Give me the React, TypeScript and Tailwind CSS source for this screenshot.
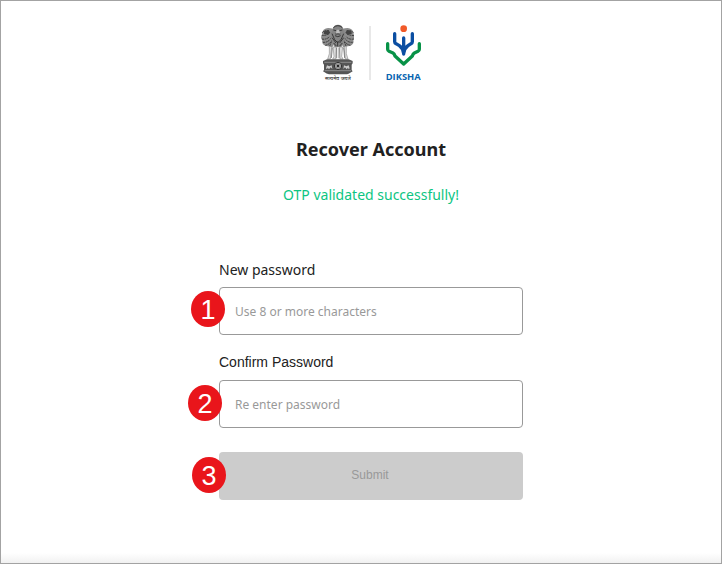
import React from "react";

const noto = "font-['Noto_Sans',sans-serif]";
const arial = "font-['Liberation_Sans',sans-serif]";

function Emblem() {
  return (
    <svg viewBox="30 27 102 171" className="h-[57px] w-[34px]" aria-label="State Emblem of India">
      {/* side lions */}
      <path d="M41 44q9-8 21-4l12 2v42l-7 13-21-5q-12-4-9-16-7-8-1-16-1-10 5-16Z" fill="#8c8c8c" />
      <path d="M126 44q-9-8-21-4l-12 2v42l7 13 21-5q12-4 9-16 7-8 1-16 1-10-5-16Z" fill="#8c8c8c" />
      <g stroke="#2c2c2c" strokeWidth="2.5" fill="none" strokeDasharray="6 2">
        <path d="M37 53q8-10 22-5M35 61q11 2 22-5M36 72q12 3 23-7M39 82q16 1 23-12M46 91q12-3 17-11M59 93l7-17" />
        <path d="M130 53q-8-10-22-5M132 61q-11 2-22-5M131 72q-12 3-23-7M128 82q-16 1-23-12M121 91q-12-3-17-11M108 93l-7-17" />
      </g>
      <path d="M42 49l14-3 5 7-7 6-12-2ZM125 49l-14-3-5 7 7 6 12-2Z" fill="#444" />
      {/* central lion */}
      <path d="M69 40q2-10 15-11 13 1 15 11l5 15-2 24-8 18H74l-8-18-2-24Z" fill="#858585" />
      <path d="M70 38q14-12 27 0M70 45l9 2M97 45l-9 2M76 57h15M75 62q8 6 17 0M66 56l8 18 9 9 10-9 8-18M66 68l12 16M101 68L89 84M71 84l8 9M97 84l-8 9M83 79v15" stroke="#303030" strokeWidth="2.7" fill="none" />
      <path d="M80 44h7l3 10-6 4-6-4Z" fill="#c0c0c0" />
      <path d="M81 54h6l-3 3Z" fill="#222" />
      {/* legs */}
      <path d="M58 92l7 5-4 35h-8l5-16ZM109 92l-7 5 4 35h8l-5-16ZM69 96h10l-2 36h-9l4-8ZM98 96H88l2 36h9l-4-8Z" fill="#ddd" stroke="#777" strokeWidth="1.5" />
      <path d="M67 98l-3 31M80 99v31M87 99v31M101 98l3 31" stroke="#555" strokeWidth="2" />
      {/* abacus and wheel */}
      <path d="M39 138l12-5h65l12 5v7l-3 4v16l3 4-12 7H51l-12-7 3-4v-16l-3-4Z" fill="#555" />
      <path d="M43 142h81M44 167h79" stroke="#bbb" strokeWidth="1.6" />
      <path d="M48 160l3-9 7 3 7-3 2 11-5-5-5 6-4-5-2 5ZM119 160l-3-9-7 3-7-3-2 11 5-5 5 6 4-5 2 5Z" fill="#ccc" />
      <circle cx="84" cy="153" r="11" fill="#aaa" stroke="#333" strokeWidth="3" />
      <path d="M84 144v18M75 153h18M78 147l12 12M90 147l-12 12" stroke="#666" strokeWidth="1.2" />
      <circle cx="84" cy="153" r="3.5" fill="#222" />
      <path d="M49 171q35 6 70 0l-7 7H56Z" fill="#555" />
      <text x="83.5" y="194" textAnchor="middle" textLength="77" lengthAdjust="spacingAndGlyphs" fontSize="14" fontWeight="500" fill="#333" fontFamily="Noto Sans, sans-serif">सत्यमेव जयते</text>
    </svg>
  );
}

function DikshaLogo() {
  return (
    <svg viewBox="60 27 108 171" className="h-[57px] w-9" aria-label="DIKSHA">
      <circle cx="116" cy="41" r="10" fill="#f15a29" />
      <g fill="none" strokeWidth="10" strokeLinecap="round" strokeLinejoin="round">
        <path d="M68 86V103Q68 107 72 109L84 114Q88 116 90 123L116 147L142 123Q144 116 148 114L159 109Q163 107 163 103V86" stroke="#079247" />
        <path d="M89 56V80Q89 84 93 86L103 92Q113 99 116 115Q119 99 129 92L138 86Q142 84 142 80V56M116 69V117" stroke="#0b4ea2" />
      </g>
      <text x="62" y="194" textLength="105" lengthAdjust="spacingAndGlyphs" fontSize="25" fontWeight="700" fill="#0865b1" fontFamily="Open Sans, sans-serif">DIKSHA</text>
    </svg>
  );
}

function Badge({ n, className }: { n: number; className: string }) {
  return (
    <span className={`absolute flex h-9 w-[34px] items-center justify-center rounded-[50%] bg-[#e9151b] pt-[2px] text-[27px] leading-none text-white ${arial} ${className}`}>
      {n}
    </span>
  );
}

export default function App() {
  return (
    <main className={`flex h-[564px] w-[722px] flex-col items-center border border-[#a3a3a3] bg-[linear-gradient(to_bottom,#fff_552px,#f1f1f1_562px)] pl-5 ${noto}`}>
      <header className="mt-[23px] flex h-[57px] items-start pr-px">
        <Emblem />
        <div className="mr-[14px] ml-[15px] mt-[2px] h-[54px] w-[2px] bg-[#e8e8e8]" />
        <DikshaLogo />
      </header>
      <h1 className="mt-[55px] text-[18px] leading-[26px] font-bold text-[#212121]">Recover Account</h1>
      <p className="mt-[23px] text-[14px] leading-5 text-[#0dc582]">OTP validated successfully!</p>
      <form className="mt-[55px] flex w-[304px] flex-col" onSubmit={(e) => e.preventDefault()}>
        <label className="h-[27px] text-[14px] leading-5 text-[#222]">New password</label>
        <div className="relative h-12">
          <input className="h-12 w-full rounded-[4px] border border-[#999] bg-white px-[15px] text-[12px] placeholder:text-[#999]" placeholder="Use 8 or more characters" />
          <Badge n={1} className="top-1 left-[-28px]" />
        </div>
        <label className={`mt-[17px] h-7 text-[14px] leading-5 text-[#222] ${arial}`}>Confirm Password</label>
        <div className="relative h-12">
          <input className="h-12 w-full rounded-[4px] border border-[#999] bg-white px-[15px] text-[12px] placeholder:text-[#999]" placeholder="Re enter password" />
          <Badge n={2} className="top-[5px] left-[-31px]" />
        </div>
        <div className="relative mt-6 h-12">
          <button disabled className={`h-12 w-full rounded-[4px] bg-[#ccc] pr-[2px] pb-[2px] text-[12px] text-[#999] ${arial}`}>Submit</button>
          <Badge n={3} className="top-[5px] left-[-27px]" />
        </div>
      </form>
    </main>
  );
}
